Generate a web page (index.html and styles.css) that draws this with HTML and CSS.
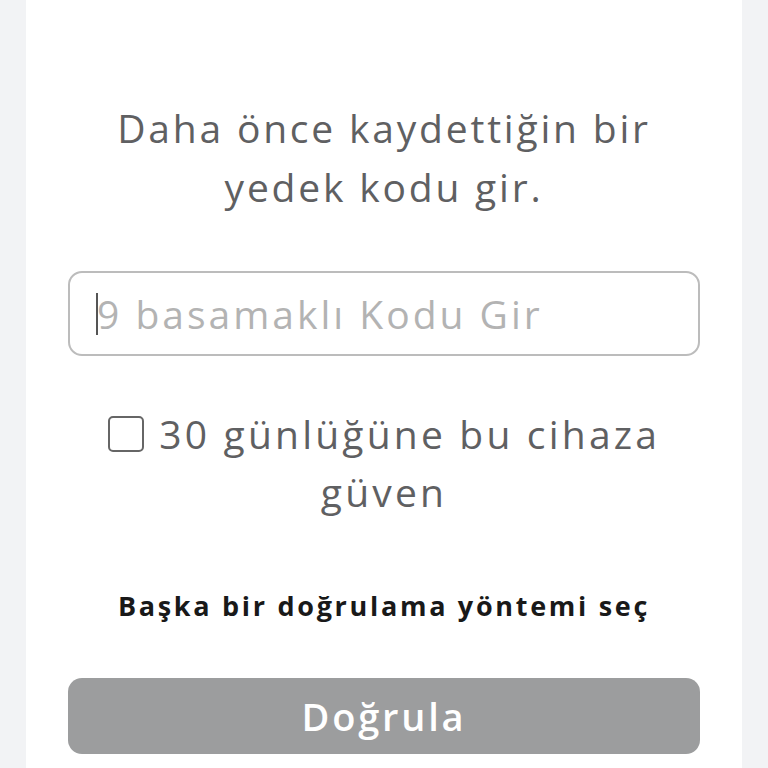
FILE: index.html
```html
<!DOCTYPE html>
<html lang="tr">
<head>
  <meta charset="UTF-8">
  <meta name="viewport" content="width=device-width, initial-scale=1.0">
  <title>İki Adımlı Doğrulama</title>
  <link rel="stylesheet" href="styles.css">
</head>
<body>
  <div class="card">
    <!-- Instructions -->
    <p class="intro">Daha önce kaydettiğin bir yedek kodu gir.</p>

    <!-- Backup code input -->
    <div class="code-field">
      <span class="caret"></span>
      <input type="text" class="code-input" placeholder="9 basamaklı Kodu Gir">
    </div>

    <!-- Trust device -->
    <label class="trust">
      <span class="box"></span> 30 günlüğüne bu cihaza güven
    </label>

    <a class="other-method" href="#">Başka bir doğrulama yöntemi seç</a>

    <button class="verify-btn" disabled>Doğrula</button>
  </div>
</body>
</html>
```

FILE: styles.css
```css
body {
  margin: 0;
  padding: 0;
  background-color: #f2f3f5;
  font-family: 'Open Sans', 'Lato', sans-serif;
  color: #5f6062;
}

.card {
  background-color: #fff;
  margin: 0 26px;
  min-height: 768px;
  padding: 98px 42px 0;
  box-sizing: border-box;
  display: flex;
  flex-direction: column;
  align-items: center;
}

.intro {
  margin: 0;
  font-size: 39px;
  line-height: 59px;
  letter-spacing: 2.8px;
  text-align: center;
  max-width: 580px;
}

.code-field {
  position: relative;
  width: 100%;
  margin-top: 55px;
}

.code-input {
  width: 100%;
  height: 85px;
  box-sizing: border-box;
  border: 2px solid #bcbcbc;
  border-radius: 14px;
  padding: 0 27px;
  font-family: inherit;
  font-size: 39px;
  letter-spacing: 3px;
  color: #5f6062;
  outline: none;
}

.code-input::placeholder {
  color: #b3b3b3;
}

.caret {
  position: absolute;
  left: 28px;
  top: 22px;
  width: 2px;
  height: 42px;
  background-color: #555;
}

.trust {
  margin-top: 49px;
  font-size: 39px;
  line-height: 58px;
  letter-spacing: 3.2px;
  text-align: center;
  max-width: 600px;
}

.box {
  display: inline-block;
  width: 32px;
  height: 32px;
  margin-right: 2px;
  border: 2px solid #666;
  border-radius: 5px;
  vertical-align: -3px;
}

.other-method {
  margin-top: 67px;
  font-size: 27px;
  line-height: 36px;
  letter-spacing: 2.7px;
  font-weight: bold;
  color: #191919;
  text-decoration: none;
}

.verify-btn {
  margin-top: 54px;
  width: 100%;
  height: 76px;
  border: none;
  border-radius: 14px;
  background-color: #9c9d9e;
  color: #fff;
  font-family: inherit;
  font-size: 38px;
  letter-spacing: 2.8px;
  font-weight: 600;
}
```
